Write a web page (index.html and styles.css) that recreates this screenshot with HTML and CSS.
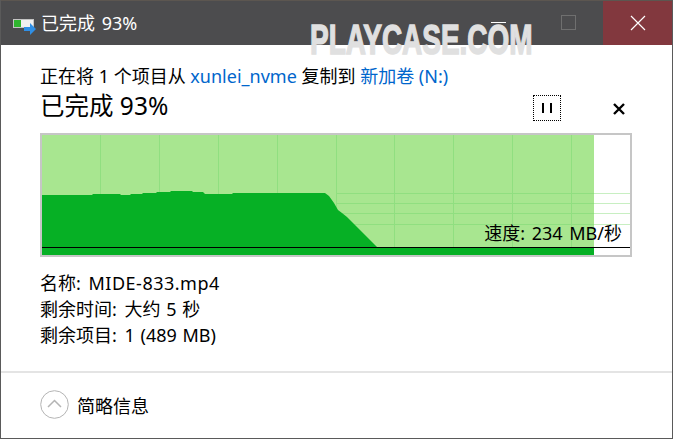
FILE: index.html
```html
<!DOCTYPE html>
<html lang="zh-CN">
  <head>
    <meta charset="UTF-8" />
    <title>已完成 93%</title>
    <link rel="stylesheet" href="styles.css">
  </head>

  <body>
    <div class="window">
      <header class="titlebar">
        <svg class="app-icon" width="24" height="18" viewBox="0 0 24 18">
          <rect x="0" y="2" width="21" height="9" fill="#c4c4c4" />
          <rect x="1" y="3" width="7" height="7" fill="#2fb52f" />
          <rect x="8" y="3" width="12" height="7" fill="#f0f0f0" />
          <path d="M11 10h6V6l6 6-6 6v-4h-6z" fill="#2f8fe6" />
        </svg>
        <span class="title-text">已完成 93%</span>
        <div class="win-buttons">
          <div class="win-btn"><span class="min-line"></span></div>
          <div class="win-btn"><span class="max-box"></span></div>
          <div class="win-btn close">
            <svg width="18" height="18" viewBox="0 0 18 18">
              <path d="M2 2l14 14M16 2L2 16" stroke="#fff" stroke-width="1.2" fill="none" />
            </svg>
          </div>
        </div>
      </header>

      <main class="content">
        <p class="copy-line">正在将 1 个项目从 <span class="link">xunlei_nvme</span> 复制到 <span class="link">新加卷 (N:)</span></p>
        <div class="status-row">
          <h1 class="status">已完成 93%</h1>
          <div class="pause-btn"><span></span><span></span></div>
          <svg class="cancel" width="12" height="12" viewBox="0 0 12 12">
            <path d="M1 1l10 10M11 1L1 11" stroke="#000" stroke-width="2.4" fill="none" />
          </svg>
        </div>

        <div class="chart">
          <svg width="588" height="120" viewBox="42 135 588 120">
            <rect x="42" y="135" width="552" height="120" fill="#a8e690" />
            <g stroke="#c8efc2" stroke-width="1">
              <path d="M594 193.5h36M594 203.5h36M594 213.5h36M594 224.5h36" />
            </g>
            <g stroke="#90df80" stroke-width="1">
              <path d="M100.500 135v120M159.500 135v120M218.500 135v120M277.500 135v120M336.500 135v120M394.500 135v120M453.500 135v120M512.500 135v120M571.500 135v120" />
              <path d="M336 193.500h258M336 203.500h258M336 213.500h258M336 224.500h258" />
            </g>
            <path d="M42 195L92 195L93 194L120 194L121 195L130 195L131 194L142 194L143 193L156 193L157 192L170 192L171 191L192 191L193 192L203 192L205 194L232 194L233 193L325 193L329 196L334 203L338 210L342 213L347 217L377 247L377 255L42 255Z" fill="#06b025" />
            <rect x="42" y="247" width="552" height="8" fill="#06b025" />
            <rect x="42" y="247" width="588" height="1" fill="#000" />
          </svg>
          <div class="speed">速度: 234 MB/秒</div>
        </div>

        <div class="details">
          <div><span class="label">名称:</span> <span class="file">MIDE-833.mp4</span></div>
          <div><span class="label">剩余时间:</span> 大约 5 秒</div>
          <div><span class="label">剩余项目:</span> 1 (489 MB)</div>
        </div>
      </main>

      <footer class="footer">
        <svg width="29" height="29" viewBox="0 0 29 29">
          <circle cx="14.500" cy="14.500" r="13.800" fill="#fff" stroke="#b4b4b4" />
          <path d="M8 17l6.500-6.500L21 17" stroke="#b4b4b4" stroke-width="1.500" fill="none" />
        </svg>
        <span>简略信息</span>
      </footer>

      <div class="watermark">PLAYCASE.COM</div>
    </div>
  </body>
</html>
```

FILE: styles.css
```css
body {
  margin: 0;
  font-family: 'Noto Sans', 'Noto Sans CJK SC', sans-serif;
  background-color: #fff;
  color: #000;
  overflow: hidden;
}

.window {
  position: relative;
  height: 439px;
  box-sizing: border-box;
  border: 1px solid #5a5a5a;
  border-top: 0;
  display: flex;
  flex-direction: column;
  overflow: hidden;
}

.titlebar {
  height: 45px;
  flex-shrink: 0;
  margin: 0 -1px;
  background-color: #4c4c4e;
  color: #fff;
  display: flex;
  align-items: center;
  padding-left: 13px;
  font-size: 18px;
  border-top: 1px solid #5c5650;
  box-sizing: border-box;
}

.app-icon {
  margin-right: 4px;
  margin-top: 5px;
}

.title-text {
  flex-grow: 1;
  line-height: 24px;
  word-spacing: 2px;
}

.win-buttons {
  display: flex;
  height: 100%;
}

.win-btn {
  width: 70px;
  display: flex;
  align-items: center;
  justify-content: center;
}

.min-line {
  width: 15px;
  height: 1px;
  background-color: #fff;
  margin-top: -2px;
}

.max-box {
  width: 13px;
  height: 13px;
  border: 1px solid #6f6f6f;
  margin-top: -1px;
}

.close {
  background-color: #82383e;
}

.content {
  flex-grow: 1;
  padding: 19px 40px 0 39px;
}

.copy-line {
  margin: 0;
  font-size: 18px;
  line-height: 24px;
}

.link {
  color: #0066cc;
}

.status-row {
  display: flex;
  align-items: center;
  height: 36px;
}

.status {
  margin: 0;
  flex-grow: 1;
  font-size: 24.5px;
  font-weight: normal;
  line-height: 32px;
}

.pause-btn {
  width: 26px;
  height: 24px;
  border: 1px dotted #000;
  display: flex;
  align-items: center;
  justify-content: center;
  gap: 6px;
  margin-top: 4px;
}

.pause-btn span {
  width: 2px;
  height: 10px;
  background-color: #000;
}

.cancel {
  margin: 6px 7px 0 52px;
}

.chart {
  position: relative;
  height: 120px;
  width: 588px;
  margin-top: 9px;
  border: 2px solid #c6c6c6;
}

.chart svg {
  display: block;
}

.speed {
  position: absolute;
  right: 8px;
  top: 86px;
  font-size: 18px;
  line-height: 24px;
  word-spacing: 2px;
}

.details {
  margin-top: 13px;
  font-size: 18px;
  line-height: 26px;
  word-spacing: 1px;
}

.label {
  margin-right: 2px;
}

.file {
  letter-spacing: 0.5px;
}

.footer {
  height: 67px;
  flex-shrink: 0;
  border-top: 2px solid #e4e4e4;
  display: flex;
  align-items: center;
  gap: 8px;
  padding: 0 0 2px 39px;
  font-size: 18px;
  box-sizing: border-box;
}

.watermark {
  position: absolute;
  top: 18px;
  left: 309px;
  font-family: 'Liberation Sans', sans-serif;
  font-size: 42px;
  line-height: 44px;
  font-weight: bold;
  color: #e0e0e0;
  -webkit-text-stroke: 1.5px #e0e0e0;
  white-space: nowrap;
  transform: scaleX(0.665);
  transform-origin: left center;
}
```
